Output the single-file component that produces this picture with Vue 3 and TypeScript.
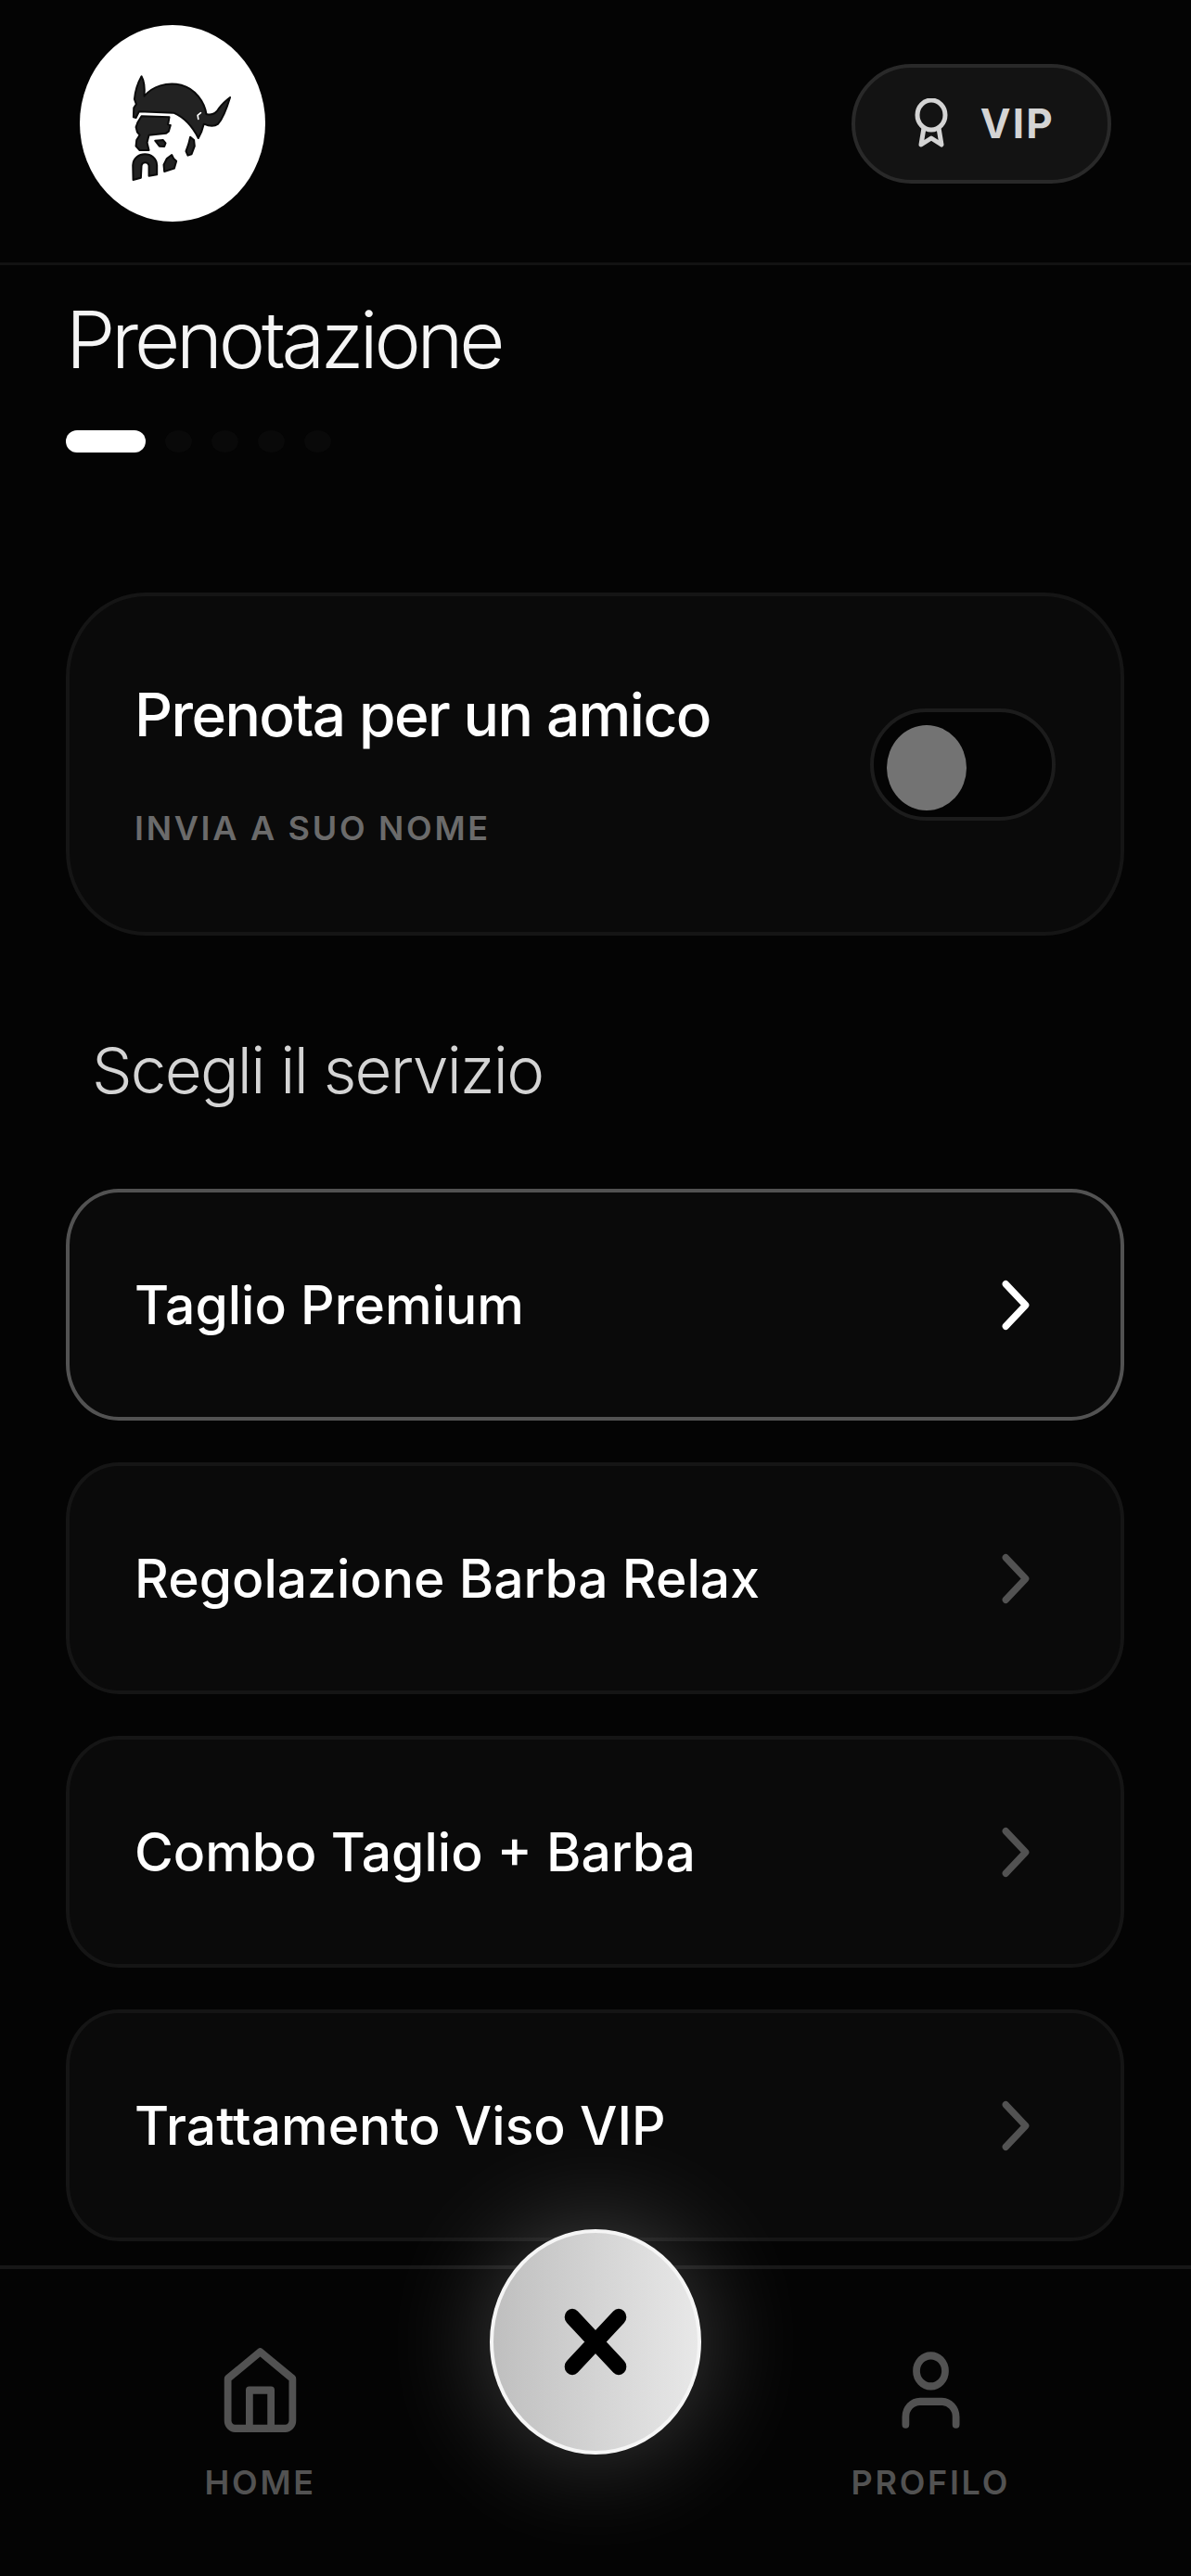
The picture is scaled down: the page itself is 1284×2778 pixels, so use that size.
<script setup lang="ts">
import { ref } from 'vue'

interface Service {
  id: string
  name: string
}

const services: Service[] = [
  { id: 'taglio', name: 'Taglio Premium' },
  { id: 'barba', name: 'Regolazione Barba Relax' },
  { id: 'combo', name: 'Combo Taglio + Barba' },
  { id: 'viso', name: 'Trattamento Viso VIP' },
]

const steps = 5
const currentStep = ref(1)
const forFriend = ref(false)
const selected = ref('taglio')
</script>

<template>
  <div class="app">
    <header class="topbar">
      <a class="logo" href="#" aria-label="Home">
        <svg viewBox="76 82 601 636" preserveAspectRatio="none" aria-hidden="true">
          <g fill="#222" stroke="#0a0a0a" stroke-width="6" stroke-linejoin="round">
            <path d="M276 248 C266 266 256 290 253 322 L259 338 L251 350 L250 380 L258 382 L268 362 L380 366 C412 380 440 408 460 448 L470 428 L478 402 C496 410 512 411 524 402 C542 382 554 346 563 316 C550 326 538 336 528 350 C518 368 506 376 486 370 C480 330 450 288 405 276 C356 266 312 280 285 312 C287 286 284 262 276 248Z" />
            <path d="M276 377 L366 380 L362 404 L370 406 L364 426 L356 432 L300 438 L294 462 L300 487 L270 487 L258 474 L260 454 L270 438 L262 428 L258 412 L264 396Z" />
            <path d="M320 456 L346 454 L354 464 L350 475 L334 474Z" />
            <path d="M434 444 L446 454 L448 474 L438 500 L426 504 L420 490 L428 468Z" />
            <path d="M374 502 L380 514 L389 522 L382 546 L350 556 L348 534 L358 514Z" />
            <path d="M249 583 L248 536 C250 488 324 488 326 536 L326 566 L300 570 L300 536 C296 524 280 524 276 536 L274 576Z" />
          </g>
          <path d="M468 366 L458 374 L460 386" fill="none" stroke="#fff" stroke-width="5" stroke-linecap="round" />
        </svg>
      </a>
      <button class="vip" type="button">
        <svg class="award" viewBox="0 0 36 54" aria-hidden="true">
          <g fill="none" stroke="currentColor" stroke-width="5" stroke-linecap="round" stroke-linejoin="round">
            <ellipse cx="18" cy="18" rx="15" ry="16" />
            <path d="M10 32 L7 50 L18 43 L29 50 L26 32" />
          </g>
        </svg>
        VIP
      </button>
    </header>

    <main class="content">
      <h1 class="title">Prenotazione</h1>
      <div class="steps" role="progressbar" aria-label="Avanzamento" :aria-valuenow="currentStep" aria-valuemin="1" :aria-valuemax="steps">
        <span v-for="n in steps" :key="n" class="step" :class="{ active: n === currentStep }"></span>
      </div>

      <label class="friend" for="friend-toggle">
        <span class="friend-text">
          <span class="friend-title">Prenota per un amico</span>
          <span class="friend-sub">INVIA A SUO NOME</span>
        </span>
        <input id="friend-toggle" v-model="forFriend" class="toggle" type="checkbox" role="switch" />
      </label>

      <h2 class="subtitle">Scegli il servizio</h2>
      <div class="services">
        <button
          v-for="service in services"
          :key="service.id"
          class="service"
          :class="{ selected: selected === service.id }"
          type="button"
          @click="selected = service.id"
        >
          <span>{{ service.name }}</span>
          <svg class="chevron" viewBox="0 0 24 24" preserveAspectRatio="none" aria-hidden="true">
            <path d="m9 18 6-6-6-6" />
          </svg>
        </button>
      </div>
    </main>

    <nav class="tabbar">
      <a class="tab" href="#home">
        <svg class="tab-icon" viewBox="0 0 24 24" preserveAspectRatio="none" aria-hidden="true">
          <path d="m3 9 9-7 9 7v11a2 2 0 0 1-2 2H5a2 2 0 0 1-2-2z" />
          <path d="M9 22V12h6v10" />
        </svg>
        HOME
      </a>
      <button class="close" type="button" aria-label="Chiudi">
        <svg viewBox="0 0 24 24" preserveAspectRatio="none" aria-hidden="true">
          <path d="M18 6 6 18M6 6l12 12" />
        </svg>
      </button>
      <a class="tab tab-profile" href="#profilo">
        <svg class="tab-icon" viewBox="0 0 24 24" preserveAspectRatio="none" aria-hidden="true">
          <path d="M19 21v-2a4 4 0 0 0-4-4H9a4 4 0 0 0-4 4v2" />
          <circle cx="12" cy="7" r="4" />
        </svg>
        PROFILO
      </a>
    </nav>
  </div>
</template>

<style>
body {
  background: #040404;
}
</style>

<style scoped>
.app {
  display: flex;
  flex-direction: column;
  min-height: 100vh;
  background: #040404;
  color: #fff;
  font-family: Inter, "Liberation Sans", sans-serif;
}

.app * {
  box-sizing: border-box;
}

button {
  margin: 0;
  font-family: inherit;
  cursor: pointer;
}

a {
  color: inherit;
  text-decoration: none;
}

.topbar {
  display: flex;
  align-items: center;
  justify-content: space-between;
  padding: 27px 86px 44px;
  border-bottom: 3px solid #121212;
}

.logo {
  width: 200px;
  height: 212px;
  overflow: hidden;
  border-radius: 50%;
  background: #fff;
}

.logo svg {
  display: block;
  width: 100%;
  height: 100%;
}

.vip {
  display: flex;
  align-items: center;
  gap: 35px;
  height: 129px;
  padding: 0 57px 0 64px;
  border: 4px solid #292929;
  border-radius: 65px;
  background: #131313;
  color: #d4d4d4;
  font-size: 44px;
  font-weight: 700;
  letter-spacing: 0.05em;
}

.award {
  width: 36px;
  height: 54px;
}

.content {
  flex: 1;
  padding: 31px 72px 26px 71px;
}

.title {
  margin: 0;
  color: #f5f5f5;
  font-size: 85px;
  font-weight: 300;
  line-height: 100px;
  letter-spacing: -0.05em;
}

.steps {
  display: flex;
  gap: 21px;
  margin: 47px 0 151px;
}

.step {
  width: 29px;
  height: 24px;
  border-radius: 50%;
  background: #090909;
}

.step.active {
  width: 86px;
  border-radius: 12px;
  background: #fff;
}

.friend {
  display: flex;
  align-items: center;
  justify-content: space-between;
  padding: 88px 70px;
  border: 4px solid #151515;
  border-radius: 86px / 91px;
  background: #0a0a0a;
  cursor: pointer;
}

.friend-text {
  display: flex;
  flex-direction: column;
  gap: 58px;
}

.friend-title {
  font-size: 64px;
  font-weight: 500;
  line-height: 80px;
  letter-spacing: -0.025em;
}

.friend-sub {
  color: #6b6b6b;
  font-size: 36px;
  font-weight: 600;
  line-height: 48px;
  letter-spacing: 0.075em;
}

.toggle {
  display: flex;
  align-items: center;
  width: 200px;
  height: 121px;
  margin: 0;
  padding: 7px 14px 0;
  appearance: none;
  border: 4px solid #1c1c1c;
  border-radius: 61px;
  background: #040404;
  cursor: pointer;
}

.toggle::before {
  width: 86px;
  height: 92px;
  border-radius: 50%;
  background: #737373;
  content: "";
}

.toggle:checked {
  justify-content: flex-end;
}

.toggle:checked::before {
  background: #fff;
}

.subtitle {
  margin: 103px 0 86px;
  padding-left: 28px;
  color: #d4d4d4;
  font-size: 69px;
  font-weight: 300;
  line-height: 84px;
  letter-spacing: -0.025em;
}

.services {
  display: flex;
  flex-direction: column;
  gap: 45px;
}

.service {
  display: flex;
  align-items: center;
  justify-content: space-between;
  height: 250px;
  padding: 0 70px;
  border: 4px solid #151515;
  border-radius: 57px / 61px;
  background: #0a0a0a;
  color: #fff;
  font-size: 57px;
  font-weight: 500;
  text-align: left;
}

.service.selected {
  border-color: #525252;
}

.chevron {
  width: 86px;
  height: 91px;
  fill: none;
  stroke: #525252;
  stroke-width: 2;
  stroke-linecap: round;
  stroke-linejoin: round;
}

.selected .chevron {
  stroke: #fff;
}

.tabbar {
  position: sticky;
  bottom: 0;
  display: grid;
  grid-template-columns: repeat(3, 1fr);
  padding: 81px 100px 77px;
  border-top: 4px solid #171717;
  background: #040404;
}

.tab {
  display: flex;
  flex-direction: column;
  align-items: center;
  gap: 26px;
  color: #525252;
  font-size: 36px;
  font-weight: 600;
  line-height: 48px;
  letter-spacing: 0.075em;
}

.tab-profile {
  grid-column: 3;
}

.tab-icon {
  width: 93px;
  height: 99px;
  fill: none;
  stroke: currentColor;
  stroke-width: 2;
  stroke-linecap: round;
  stroke-linejoin: round;
}

.close {
  position: absolute;
  top: -43px;
  left: 50%;
  display: flex;
  align-items: center;
  justify-content: center;
  width: 228px;
  height: 243px;
  padding: 0;
  transform: translateX(-50%);
  border: 4px solid #f5f5f5;
  border-radius: 50%;
  background: linear-gradient(to right, #bfbfbf, #e8e8e8);
  box-shadow: 0 0 120px rgba(255, 255, 255, 0.25);
}

.close svg {
  width: 100px;
  height: 107px;
  flex: none;
  fill: none;
  stroke: #000;
  stroke-width: 4;
  stroke-linecap: round;
}
</style>
